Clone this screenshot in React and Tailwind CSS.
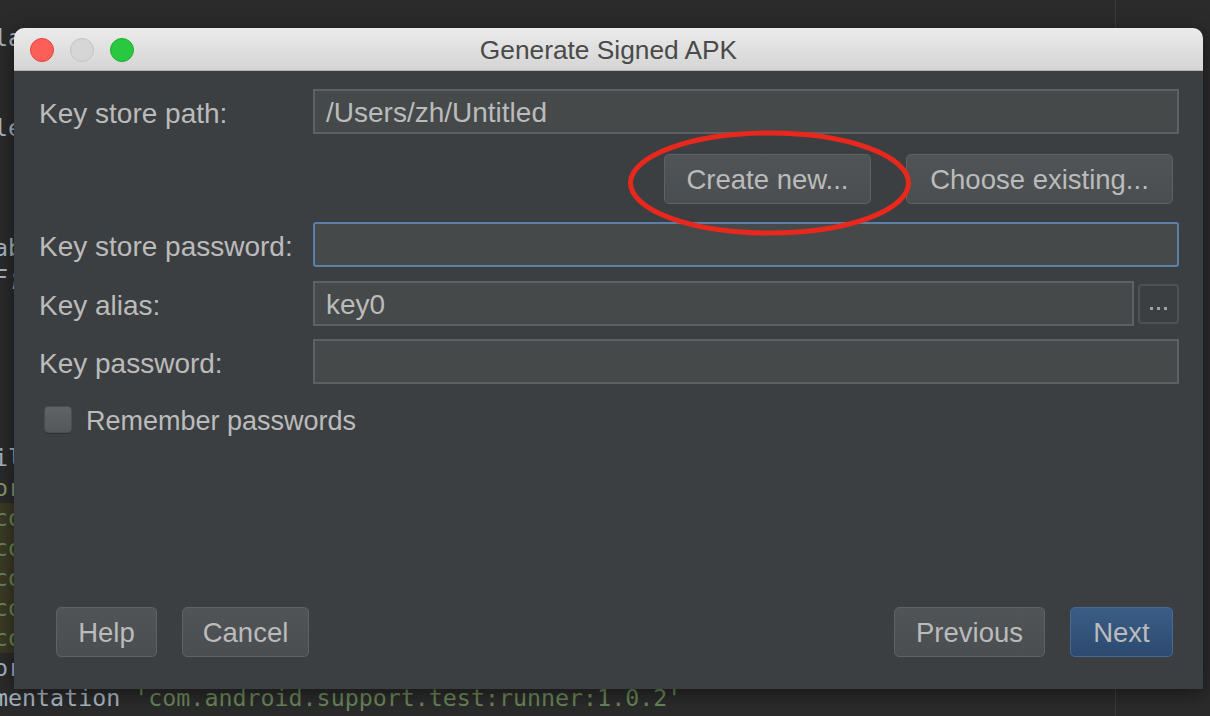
import React from "react";

const codeLines = [
  { t: "la", c: "text-[#a9b7c6]" },
  { t: "", c: "" },
  { t: "", c: "" },
  { t: "le", c: "text-[#a9b7c6]" },
  { t: "", c: "" },
  { t: "", c: "" },
  { t: "", c: "" },
  { t: "ab", c: "text-[#a9b7c6]" },
  { t: "F;", c: "text-[#a9b7c6]" },
  { t: "", c: "" },
  { t: "", c: "" },
  { t: "", c: "" },
  { t: "", c: "" },
  { t: "", c: "" },
  { t: "il", c: "text-[#a9b7c6]" },
  { t: "or", c: "text-[#8a9a6a]" },
  { t: "co", c: "text-[#6a8759]", hl: true },
  { t: "co", c: "text-[#6a8759]", hl: true },
  { t: "co", c: "text-[#6a8759]", hl: true },
  { t: "co", c: "text-[#6a8759]", hl: true },
  { t: "co", c: "text-[#6a8759]", hl: true },
  { t: "or", c: "text-[#a9b7c6]" },
];

function Field({ label, value, focused, children }) {
  return (
    <div className="flex items-center h-[45px]">
      <div className="w-[274px] shrink-0 pt-[4px] text-[28px] leading-[32px] text-[#bbbbbb]">{label}</div>
      <div
        className={
          "flex-1 h-[45px] flex items-center px-[11px] pt-[3px] text-[28px] leading-[32px] text-[#bbbbbb] bg-[#45494a] " +
          (focused
            ? "border-2 border-[#5b7fa8] rounded-[3px]"
            : "border-2 border-[#5e6163]")
        }
      >
        {value}
      </div>
      {children}
    </div>
  );
}

function Btn({ label, w, primary }) {
  return (
    <button
      className={
        "h-[50px] pt-[2px] rounded-[5px] border text-[27.5px] leading-[32px] text-[#bbbbbb] " +
        w +
        (primary
          ? " bg-gradient-to-b from-[#3a5d86] to-[#2c4a70] border-[#4a6990]"
          : " bg-gradient-to-b from-[#505456] to-[#4a4e50] border-[#5f6264]")
      }
    >
      {label}
    </button>
  );
}

export default function App() {
  return (
    <div className="relative w-[1210px] h-[716px] overflow-hidden bg-[#2b2b2b] font-['Liberation_Sans',sans-serif]">
      {/* editor behind the dialog */}
      <div className="absolute left-[1115px] top-0 bottom-0 w-[1px] bg-[#3c3c3c]" />
      <div className="w-[1115px] pt-[23px] font-['DejaVu_Sans_Mono',monospace] text-[23.3px] whitespace-pre">
        {codeLines.map((l, i) => (
          <div key={i} className={"h-[30px] leading-[30px] " + l.c + (l.hl ? " bg-[#3b3a25]" : "")}>
            <span className="ml-[-6px]">{l.t}</span>
          </div>
        ))}
        <div className="h-[30px] leading-[30px] text-[#a9b7c6]">
          <span className="ml-[-6px]">
            mentation <span className="text-[#6a8759]">'com.android.support.test:runner:1.0.2'</span>
          </span>
        </div>
      </div>

      {/* dialog window */}
      <div className="absolute left-[14px] top-[28px] w-[1189px] h-[661px] flex flex-col rounded-t-[10px] overflow-hidden shadow-[0_4px_20px_rgba(0,0,0,0.5)]">
        <div className="relative h-[43px] shrink-0 flex items-center justify-center bg-gradient-to-b from-[#ebebeb] to-[#d5d5d5] border-b border-[#b5b5b5]">
          <div className="absolute left-[16px] top-[10px] flex gap-[16px]">
            <div className="w-[24px] h-[24px] rounded-full bg-[#fc5f57] border border-[#e0443e]" />
            <div className="w-[24px] h-[24px] rounded-full bg-[#d6d6d6] border border-[#c2c2c2]" />
            <div className="w-[24px] h-[24px] rounded-full bg-[#28c840] border border-[#1dad2b]" />
          </div>
          <div className="pt-[2px] text-[26.3px] leading-[32px] text-[#4a4a4a]">Generate Signed APK</div>
        </div>

        <div className="relative flex-1 flex flex-col bg-[#3c3f41] pl-[25px] pr-[24px] pt-[18px] pb-[32px]">
          <Field label="Key store path:" value="/Users/zh/Untitled" />

          <div className="flex justify-end gap-[35px] pr-[6px] mt-[20px]">
            <Btn label="Create new..." w="w-[207px]" />
            <Btn label="Choose existing..." w="w-[267px]" />
          </div>

          <div className="mt-[18px]">
            <Field label="Key store password:" value="" focused />
          </div>
          <div className="mt-[14px]">
            <Field label="Key alias:" value="key0">
              <div className="ml-[4px] w-[41px] h-[40px] shrink-0 flex items-end justify-center pb-[12px] gap-[4px] rounded-[4px] border-2 border-[#4f5254] bg-[#3c3f41]">
                <span className="w-[3px] h-[3px] bg-[#a0a0a0]" />
                <span className="w-[3px] h-[3px] bg-[#a0a0a0]" />
                <span className="w-[3px] h-[3px] bg-[#a0a0a0]" />
              </div>
            </Field>
          </div>
          <div className="mt-[13px]">
            <Field label="Key password:" value="" />
          </div>

          <div className="flex items-center mt-[18px] pl-[5px]">
            <div className="w-[28px] h-[27px] rounded-[4px] bg-gradient-to-b from-[#606365] to-[#55585a] border border-[#4a4c4e] shadow-[0_1px_0_#2e3032]" />
            <div className="ml-[14px] pt-[3px] text-[27px] leading-[32px] text-[#bbbbbb]">Remember passwords</div>
          </div>

          <div className="flex-1" />

          <div className="flex items-center pl-[17px] pr-[6px]">
            <Btn label="Help" w="w-[101px]" />
            <div className="w-[25px]" />
            <Btn label="Cancel" w="w-[127px]" />
            <div className="flex-1" />
            <Btn label="Previous" w="w-[151px]" />
            <div className="w-[25px]" />
            <Btn label="Next" w="w-[103px]" primary />
          </div>
        </div>
      </div>

      {/* red annotation ellipse */}
      <svg className="absolute left-0 top-0 pointer-events-none" width="1210" height="716">
        <ellipse cx="769.5" cy="183" rx="139" ry="50" fill="none" stroke="#e8281c" strokeWidth="5" />
      </svg>
    </div>
  );
}
